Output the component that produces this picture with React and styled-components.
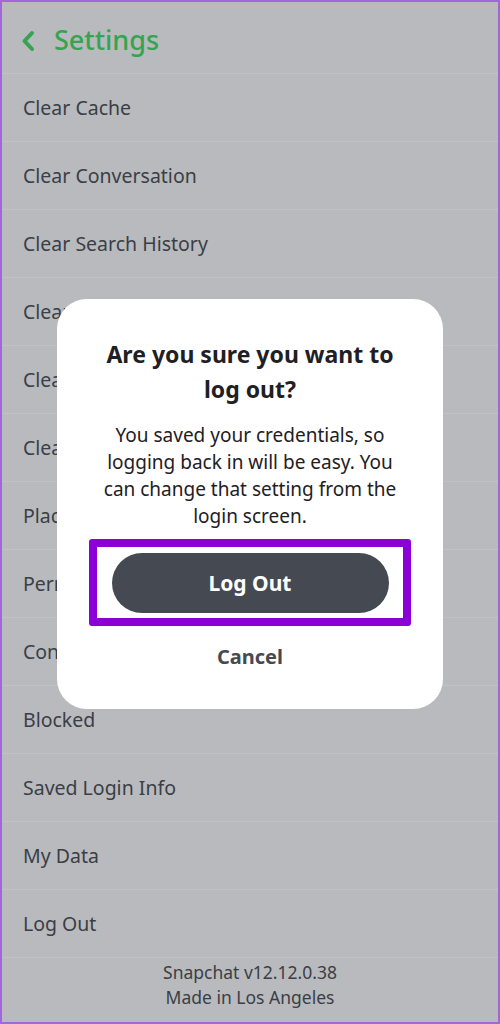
import React from "react";
import styled, { createGlobalStyle } from "styled-components";

const GlobalStyle = createGlobalStyle`
  html, body {
    margin: 0;
    padding: 0;
    background: #b8babe;
  }
  * {
    box-sizing: border-box;
  }
`;

const rows = [
  "Clear Cache",
  "Clear Conversation",
  "Clear Search History",
  "Clear Top Friends",
  "Clear Lens Data",
  "Clear Sticker Searches",
  "Places Permissions",
  "Permissions",
  "Contact Syncing",
  "Blocked",
  "Saved Login Info",
  "My Data",
  "Log Out",
];

function App() {
  return (
    <>
      <GlobalStyle />
      <Screen>
        <Header>
          <Back viewBox="0 0 14 22">
            <path d="M11 3 L3.5 11 L11 19" />
          </Back>
          <Title>Settings</Title>
        </Header>
        <List>
          {rows.map((label) => (
            <Row key={label}>{label}</Row>
          ))}
        </List>
        <Footer>
          <div>Snapchat v12.12.0.38</div>
          <div>Made in Los Angeles</div>
        </Footer>
        <Dialog>
          <DialogTitle>
            Are you sure you want to
            <br />
            log out?
          </DialogTitle>
          <DialogText>
            You saved your credentials, so
            <br />
            logging back in will be easy. You
            <br />
            can change that setting from the
            <br />
            login screen.
          </DialogText>
          <Highlight>
            <PrimaryButton>Log Out</PrimaryButton>
          </Highlight>
          <CancelButton>Cancel</CancelButton>
        </Dialog>
      </Screen>
    </>
  );
}

export default App;

const Screen = styled.div`
  position: relative;
  width: 500px;
  height: 1024px;
  background: #b8babe;
  border: 2px solid #a266dc;
  font-family: "Noto Sans", "Open Sans", sans-serif;
  color: #3b3e45;
  overflow: hidden;
`;

const Header = styled.div`
  height: 72px;
  display: flex;
  align-items: center;
  padding-left: 19px;
  padding-top: 6px;
  gap: 19px;
  border-bottom: 1px solid #c0c2c6;
`;

const Back = styled.svg`
  width: 14px;
  height: 22px;
  fill: none;
  stroke: #35a450;
  stroke-width: 4;
  stroke-linecap: round;
  stroke-linejoin: round;
`;

const Title = styled.div`
  color: #35a450;
  font-size: 27px;
  font-weight: 500;
  padding-bottom: 2px;
`;

const List = styled.div`
  display: flex;
  flex-direction: column;
`;

const Row = styled.div`
  height: 68px;
  display: flex;
  align-items: center;
  padding-left: 21px;
  font-size: 19.5px;
  border-bottom: 1px solid #c0c2c6;
`;

const Footer = styled.div`
  display: flex;
  flex-direction: column;
  align-items: center;
  padding-top: 2px;
  font-size: 17.5px;
  line-height: 25px;
`;

const Dialog = styled.div`
  position: absolute;
  left: 55px;
  top: 297px;
  width: 386px;
  height: 410px;
  background: #ffffff;
  border-radius: 30px;
  display: flex;
  flex-direction: column;
  align-items: center;
  padding: 38px 10px 0;
  color: #1e2024;
`;

const DialogTitle = styled.div`
  font-size: 23px;
  font-weight: 700;
  line-height: 35px;
  text-align: center;
`;

const DialogText = styled.div`
  margin-top: 15px;
  font-size: 19px;
  line-height: 27px;
  text-align: center;
`;

const Highlight = styled.div`
  margin-top: 9px;
  width: 322px;
  height: 87px;
  border: 8px solid #8a00d6;
  border-radius: 3px;
  display: flex;
  align-items: center;
  justify-content: center;
`;

const PrimaryButton = styled.button`
  width: 277px;
  height: 60px;
  border: none;
  border-radius: 30px;
  background: #454a52;
  color: #ffffff;
  font-family: inherit;
  font-size: 21px;
  font-weight: 700;
`;

const CancelButton = styled.button`
  margin-top: 16px;
  border: none;
  background: none;
  color: #454a52;
  font-family: inherit;
  font-size: 20px;
  font-weight: 700;
`;
